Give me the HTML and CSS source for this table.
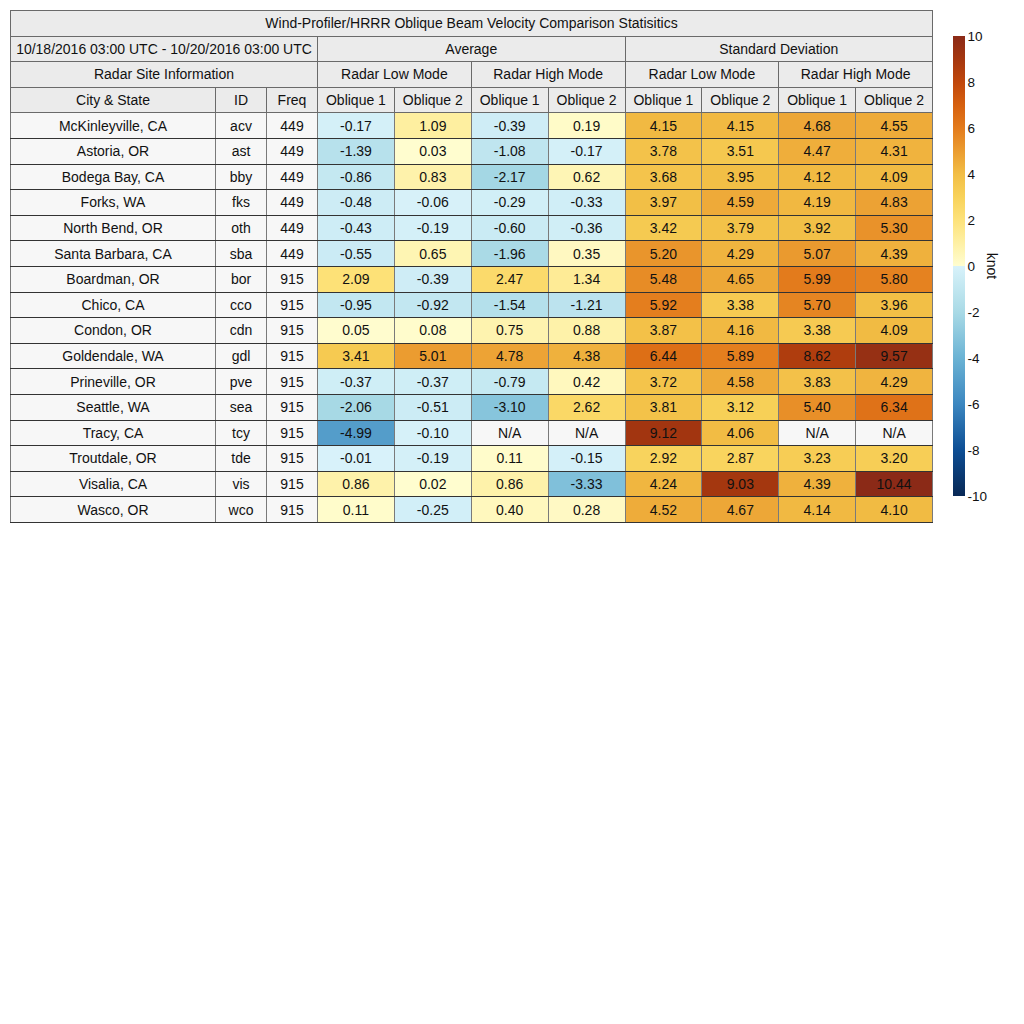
FILE: index.html
```html
<!DOCTYPE html>
<html>
<head>
<meta charset="utf-8">
<title>Wind-Profiler/HRRR Oblique Beam Velocity Comparison Statisitics</title>
<link rel="stylesheet" href="styles.css">
</head>
<body>
<div class="page">
<table class="stats">
<colgroup>
<col class="c-city"><col class="c-id"><col class="c-freq">
<col class="c-val"><col class="c-val"><col class="c-val"><col class="c-val">
<col class="c-val"><col class="c-val"><col class="c-val"><col class="c-val">
</colgroup>
<thead>
<tr><th colspan="11">Wind-Profiler/HRRR Oblique Beam Velocity Comparison Statisitics</th></tr>
<tr><th colspan="3">10/18/2016 03:00 UTC - 10/20/2016 03:00 UTC</th><th colspan="4">Average</th><th colspan="4">Standard Deviation</th></tr>
<tr><th colspan="3">Radar Site Information</th><th colspan="2">Radar Low Mode</th><th colspan="2">Radar High Mode</th><th colspan="2">Radar Low Mode</th><th colspan="2">Radar High Mode</th></tr>
<tr><th>City &amp; State</th><th>ID</th><th>Freq</th><th>Oblique 1</th><th>Oblique 2</th><th>Oblique 1</th><th>Oblique 2</th><th>Oblique 1</th><th>Oblique 2</th><th>Oblique 1</th><th>Oblique 2</th></tr>
</thead>
<tbody>
<tr><td class="info">McKinleyville, CA</td><td class="info">acv</td><td class="info">449</td><td class="num">-0.17</td><td class="num">1.09</td><td class="num">-0.39</td><td class="num">0.19</td><td class="num">4.15</td><td class="num">4.15</td><td class="num">4.68</td><td class="num">4.55</td></tr>
<tr><td class="info">Astoria, OR</td><td class="info">ast</td><td class="info">449</td><td class="num">-1.39</td><td class="num">0.03</td><td class="num">-1.08</td><td class="num">-0.17</td><td class="num">3.78</td><td class="num">3.51</td><td class="num">4.47</td><td class="num">4.31</td></tr>
<tr><td class="info">Bodega Bay, CA</td><td class="info">bby</td><td class="info">449</td><td class="num">-0.86</td><td class="num">0.83</td><td class="num">-2.17</td><td class="num">0.62</td><td class="num">3.68</td><td class="num">3.95</td><td class="num">4.12</td><td class="num">4.09</td></tr>
<tr><td class="info">Forks, WA</td><td class="info">fks</td><td class="info">449</td><td class="num">-0.48</td><td class="num">-0.06</td><td class="num">-0.29</td><td class="num">-0.33</td><td class="num">3.97</td><td class="num">4.59</td><td class="num">4.19</td><td class="num">4.83</td></tr>
<tr><td class="info">North Bend, OR</td><td class="info">oth</td><td class="info">449</td><td class="num">-0.43</td><td class="num">-0.19</td><td class="num">-0.60</td><td class="num">-0.36</td><td class="num">3.42</td><td class="num">3.79</td><td class="num">3.92</td><td class="num">5.30</td></tr>
<tr><td class="info">Santa Barbara, CA</td><td class="info">sba</td><td class="info">449</td><td class="num">-0.55</td><td class="num">0.65</td><td class="num">-1.96</td><td class="num">0.35</td><td class="num">5.20</td><td class="num">4.29</td><td class="num">5.07</td><td class="num">4.39</td></tr>
<tr><td class="info">Boardman, OR</td><td class="info">bor</td><td class="info">915</td><td class="num">2.09</td><td class="num">-0.39</td><td class="num">2.47</td><td class="num">1.34</td><td class="num">5.48</td><td class="num">4.65</td><td class="num">5.99</td><td class="num">5.80</td></tr>
<tr><td class="info">Chico, CA</td><td class="info">cco</td><td class="info">915</td><td class="num">-0.95</td><td class="num">-0.92</td><td class="num">-1.54</td><td class="num">-1.21</td><td class="num">5.92</td><td class="num">3.38</td><td class="num">5.70</td><td class="num">3.96</td></tr>
<tr><td class="info">Condon, OR</td><td class="info">cdn</td><td class="info">915</td><td class="num">0.05</td><td class="num">0.08</td><td class="num">0.75</td><td class="num">0.88</td><td class="num">3.87</td><td class="num">4.16</td><td class="num">3.38</td><td class="num">4.09</td></tr>
<tr><td class="info">Goldendale, WA</td><td class="info">gdl</td><td class="info">915</td><td class="num">3.41</td><td class="num">5.01</td><td class="num">4.78</td><td class="num">4.38</td><td class="num">6.44</td><td class="num">5.89</td><td class="num">8.62</td><td class="num">9.57</td></tr>
<tr><td class="info">Prineville, OR</td><td class="info">pve</td><td class="info">915</td><td class="num">-0.37</td><td class="num">-0.37</td><td class="num">-0.79</td><td class="num">0.42</td><td class="num">3.72</td><td class="num">4.58</td><td class="num">3.83</td><td class="num">4.29</td></tr>
<tr><td class="info">Seattle, WA</td><td class="info">sea</td><td class="info">915</td><td class="num">-2.06</td><td class="num">-0.51</td><td class="num">-3.10</td><td class="num">2.62</td><td class="num">3.81</td><td class="num">3.12</td><td class="num">5.40</td><td class="num">6.34</td></tr>
<tr><td class="info">Tracy, CA</td><td class="info">tcy</td><td class="info">915</td><td class="num">-4.99</td><td class="num">-0.10</td><td class="num">N/A</td><td class="num">N/A</td><td class="num">9.12</td><td class="num">4.06</td><td class="num">N/A</td><td class="num">N/A</td></tr>
<tr><td class="info">Troutdale, OR</td><td class="info">tde</td><td class="info">915</td><td class="num">-0.01</td><td class="num">-0.19</td><td class="num">0.11</td><td class="num">-0.15</td><td class="num">2.92</td><td class="num">2.87</td><td class="num">3.23</td><td class="num">3.20</td></tr>
<tr><td class="info">Visalia, CA</td><td class="info">vis</td><td class="info">915</td><td class="num">0.86</td><td class="num">0.02</td><td class="num">0.86</td><td class="num">-3.33</td><td class="num">4.24</td><td class="num">9.03</td><td class="num">4.39</td><td class="num">10.44</td></tr>
<tr><td class="info">Wasco, OR</td><td class="info">wco</td><td class="info">915</td><td class="num">0.11</td><td class="num">-0.25</td><td class="num">0.40</td><td class="num">0.28</td><td class="num">4.52</td><td class="num">4.67</td><td class="num">4.14</td><td class="num">4.10</td></tr>
</tbody>
</table>
<svg class="colorbar" width="92" height="520" viewBox="0 0 92 520">
<defs>
<linearGradient id="cmap" x1="0" y1="0" x2="0" y2="1">
<stop offset="0" stop-color="#8B2A17"/>
<stop offset="0.05" stop-color="#A5370F"/>
<stop offset="0.1" stop-color="#C0470C"/>
<stop offset="0.15" stop-color="#D6600F"/>
<stop offset="0.2" stop-color="#E37B1C"/>
<stop offset="0.25" stop-color="#EB9C30"/>
<stop offset="0.3" stop-color="#F2BE45"/>
<stop offset="0.35" stop-color="#F8D25A"/>
<stop offset="0.4" stop-color="#FDE27A"/>
<stop offset="0.45" stop-color="#FEF0A4"/>
<stop offset="0.5" stop-color="#FFFDD0"/>
<stop offset="0.5" stop-color="#D8F2FA"/>
<stop offset="0.6" stop-color="#A9DAE6"/>
<stop offset="0.7" stop-color="#6BB3D4"/>
<stop offset="0.8" stop-color="#3C87C0"/>
<stop offset="0.9" stop-color="#0D4E94"/>
<stop offset="1" stop-color="#082855"/>
</linearGradient>
</defs>
<rect x="20" y="26" width="12" height="460" fill="url(#cmap)"/>
<g class="ticks">
<text x="34.5" y="31">10</text>
<text x="34.5" y="77">8</text>
<text x="34.5" y="123">6</text>
<text x="34.5" y="169">4</text>
<text x="34.5" y="215">2</text>
<text x="34.5" y="261">0</text>
<text x="34.5" y="307">-2</text>
<text x="34.5" y="353">-4</text>
<text x="34.5" y="399">-6</text>
<text x="34.5" y="445">-8</text>
<text x="34.5" y="491">-10</text>
</g>
<text class="unit" x="0" y="0" transform="translate(59 256) rotate(90)">knot</text>
</svg>
</div>
<script src="script.js"></script>
</body>
</html>
```

FILE: styles.css
```css
html, body {
  margin: 0;
  padding: 0;
  background: #ffffff;
}
body {
  font-family: "Liberation Sans", Arial, Helvetica, sans-serif;
  color: #111111;
}
.page {
  display: flex;
  align-items: flex-start;
  padding: 10px 0 0 10px;
}
.stats {
  width: 922px;
  table-layout: fixed;
  border-collapse: collapse;
  font-size: 14px;
  flex: none;
}
.c-city { width: 205px; }
.c-id { width: 51px; }
.c-freq { width: 51px; }
.c-val { width: 76.875px; }
.stats tr {
  height: 25.6px;
}
.stats th,
.stats td {
  padding: 0;
  text-align: center;
  vertical-align: middle;
  white-space: nowrap;
  line-height: 16px;
}
.stats th {
  font-weight: normal;
  background: #ebebeb;
  border: 1px solid #6a6a6a;
}
.stats td {
  border-top: 1px solid #333333;
  border-bottom: 1px solid #333333;
  border-left: 1px solid #7a7a7a;
  border-right: 1px solid #7a7a7a;
}
.stats td.info {
  background: #f7f7f7;
}
.stats td.na {
  background: #f7f7f7;
}
.colorbar {
  display: block;
  flex: none;
}
.ticks text {
  font-family: "Liberation Sans", Arial, Helvetica, sans-serif;
  font-size: 13.5px;
  fill: #111111;
}
.unit {
  font-family: "Liberation Sans", Arial, Helvetica, sans-serif;
  font-size: 14px;
  fill: #111111;
  text-anchor: middle;
  dominant-baseline: central;
}
```

FILE: script.js
```js
(function () {
  var pos = [
    [0, [255, 253, 208]],
    [1, [254, 240, 164]],
    [2, [253, 226, 122]],
    [3, [248, 210, 90]],
    [4, [242, 190, 69]],
    [5, [235, 156, 48]],
    [6, [227, 123, 28]],
    [7, [214, 96, 15]],
    [8, [192, 71, 12]],
    [9, [165, 55, 15]],
    [10, [139, 42, 23]]
  ];
  var neg = [
    [0, [216, 242, 250]],
    [2, [169, 218, 230]],
    [4, [107, 179, 212]],
    [6, [60, 135, 192]],
    [8, [13, 78, 148]],
    [10, [8, 40, 85]]
  ];
  function interp(stops, a) {
    if (a >= stops[stops.length - 1][0]) return stops[stops.length - 1][1];
    for (var i = 0; i < stops.length - 1; i++) {
      var s0 = stops[i], s1 = stops[i + 1];
      if (a >= s0[0] && a <= s1[0]) {
        var t = (a - s0[0]) / (s1[0] - s0[0]);
        return [0, 1, 2].map(function (k) {
          return Math.round(s0[1][k] + (s1[1][k] - s0[1][k]) * t);
        });
      }
    }
    return stops[0][1];
  }
  var cells = document.querySelectorAll('.stats td.num');
  for (var i = 0; i < cells.length; i++) {
    var v = parseFloat(cells[i].textContent);
    if (isNaN(v)) {
      cells[i].classList.add('na');
      continue;
    }
    var c = v >= 0 ? interp(pos, v) : interp(neg, -v);
    cells[i].style.backgroundColor = 'rgb(' + c.join(',') + ')';
  }
})();
```
